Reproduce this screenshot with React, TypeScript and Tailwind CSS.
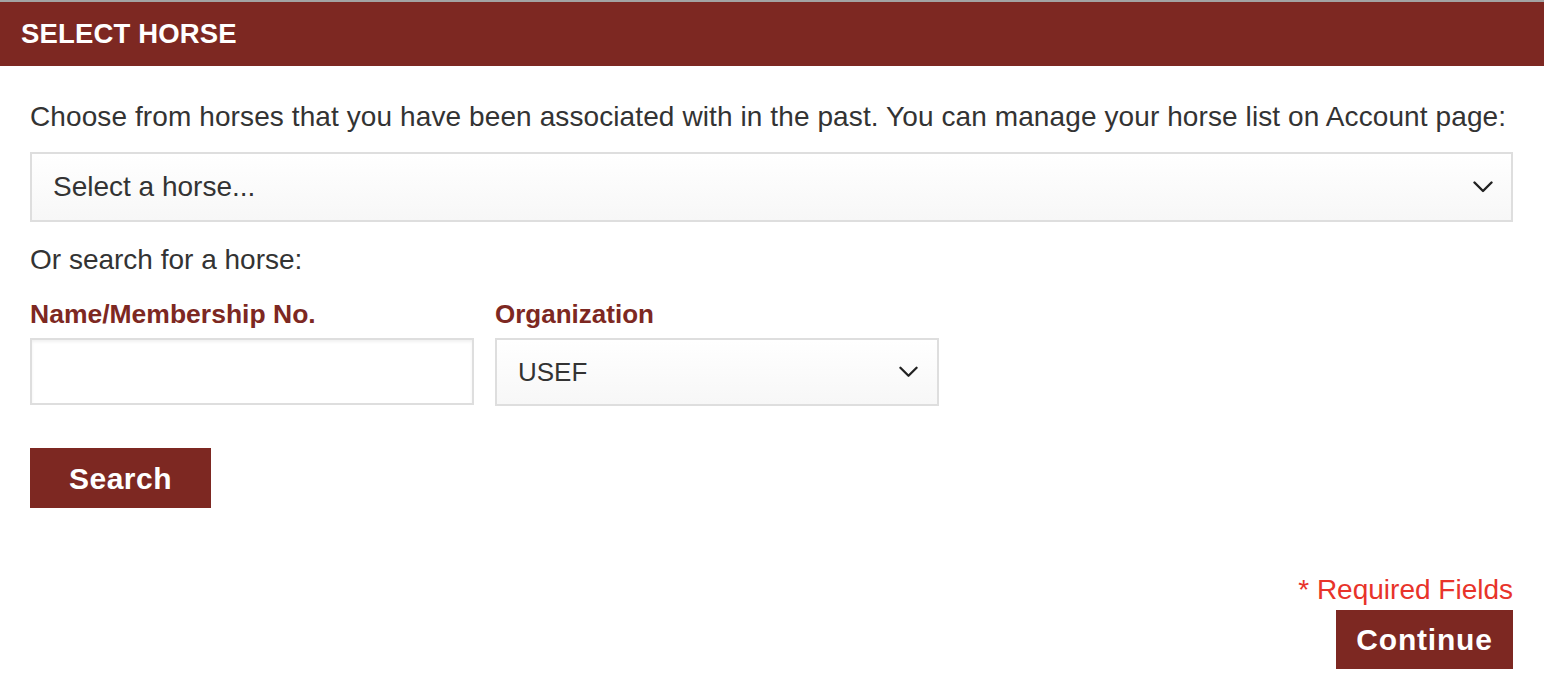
function Chevron({ w = 20 }: { w?: number }) {
    return (
        <svg width={w} height={12} viewBox="0 0 20 12" fill="none" className="text-[#222]">
            <path d="M1.5 1.5 L10 10 L18.5 1.5" stroke="currentColor" strokeWidth={2.4} strokeLinecap="round" strokeLinejoin="round" />
        </svg>
    );
}

export default function App() {
    return (
        <div className="min-h-[700px] bg-white font-['Liberation_Sans',Arial,sans-serif] text-[#333]">
            <div className="border-t-2 border-[#a3a3a3] bg-[#7d2822] h-[66px] flex items-center px-[21px]">
                <h1 className="text-[27.5px] font-bold text-white tracking-[0.15px]">SELECT HORSE</h1>
            </div>

            <div className="px-[30px] pr-[31px]">
                <p className="text-[28px] mt-[34px] leading-[34px] tracking-[0.1px]">
                    Choose from horses that you have been associated with in the past. You can manage your horse list on Account page:
                </p>

                <div className="mt-[18px] h-[70px] border-2 border-[#dedede] bg-gradient-to-b from-white to-[#f7f7f7] flex items-center justify-between pl-[21px] pr-[18px]">
                    <span className="text-[28px] text-[#333]">Select a horse...</span>
                    <Chevron />
                </div>

                <p className="text-[28px] mt-[24px] leading-[28px]">Or search for a horse:</p>

                <div className="flex gap-[21px] mt-[26px]">
                    <div className="w-[444px]">
                        <label className="block text-[26.5px] font-bold text-[#7d2822] leading-[28px]">Name/Membership No.</label>
                        <input className="mt-[10px] block w-full h-[67px] border-2 border-[#dedede] outline-none shadow-[inset_0_2px_3px_rgba(0,0,0,0.06)]" />
                    </div>
                    <div className="w-[444px]">
                        <label className="block text-[26px] font-bold text-[#7d2822] leading-[28px]">Organization</label>
                        <div className="mt-[10px] h-[68px] border-2 border-[#dedede] bg-gradient-to-b from-white to-[#f7f7f7] flex items-center justify-between pl-[21px] pr-[19px]">
                            <span className="text-[26px] text-[#333]">USEF</span>
                            <Chevron w={19} />
                        </div>
                    </div>
                </div>

                <button className="mt-[42px] w-[181px] h-[60px] bg-[#7d2822] text-white text-[30px] font-bold tracking-[0.5px]">Search</button>

                <div className="flex flex-col items-end mt-[68px]">
                    <p className="text-[28px] text-[#e8332a] leading-[28px]">* Required Fields</p>
                    <button className="mt-[6px] w-[177px] h-[59px] bg-[#7d2822] text-white text-[30px] font-bold tracking-[0.8px]">Continue</button>
                </div>
            </div>
        </div>
    );
}
